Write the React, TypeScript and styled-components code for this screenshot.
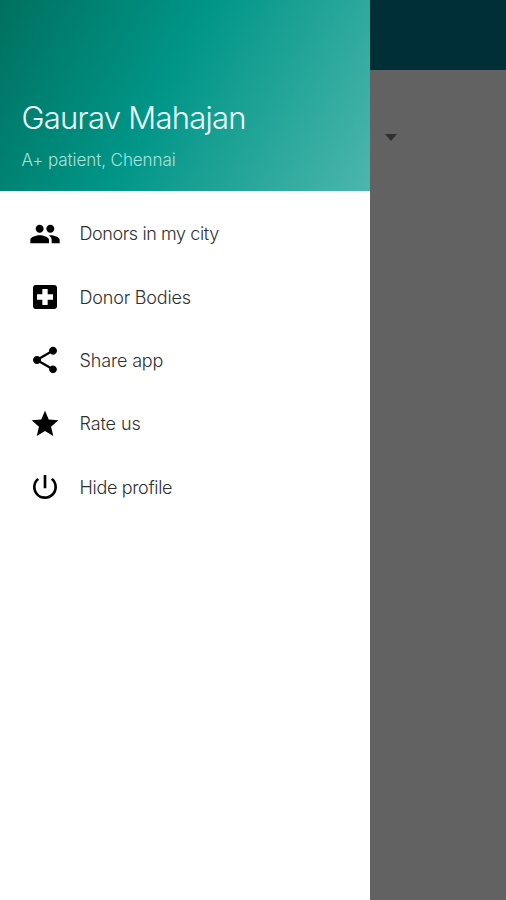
import React from 'react';
import styled, { createGlobalStyle } from 'styled-components';
import { MdPeople, MdLocalHospital, MdShare, MdStar, MdPowerSettingsNew } from 'react-icons/md';

const GlobalStyle = createGlobalStyle`
  * { box-sizing: border-box; }
  body { margin: 0; }
`;

const Screen = styled.div`
  display: flex;
  width: 506px;
  height: 900px;
  overflow: hidden;
  background: #626262;
  font-family: Inter, 'Liberation Sans', sans-serif;
  font-weight: 300;
`;

const Drawer = styled.aside`
  flex: 0 0 370px;
  background: #fff;
`;

const Header = styled.header`
  display: flex;
  flex-direction: column;
  justify-content: flex-end;
  height: 191px;
  padding: 0 21.5px 20px;
  background: linear-gradient(119deg, #00705f 0%, #009688 45%, #4db6ac 100%);
`;

const Name = styled.h1`
  margin: 0 0 13px;
  font-size: 31px;
  font-weight: 300;
  line-height: 36px;
  letter-spacing: -0.74px;
  white-space: nowrap;
  color: #f0fffd;
`;

const Details = styled.p`
  margin: 0;
  font-size: 17px;
  line-height: 22px;
  letter-spacing: -0.08px;
  white-space: nowrap;
  color: #a9e2dc;
`;

const Menu = styled.nav`
  display: flex;
  flex-direction: column;
  padding-top: 11px;
`;

const MenuItem = styled.a`
  display: flex;
  align-items: center;
  height: 63.3px;
  padding-left: 29px;
  gap: 18.5px;
  color: #000;

  svg {
    width: 32px;
    height: 32px;
    flex: none;
  }
`;

const Label = styled.span<{ $spacing: number }>`
  padding-top: 1.4px;
  font-size: 18px;
  letter-spacing: ${(p) => p.$spacing}px;
  line-height: 24px;
  white-space: nowrap;
  color: #303030;
`;

const DimmedPage = styled.main`
  flex: 1;
`;

const Toolbar = styled.div`
  height: 70px;
  background: #002e37;
`;

const DropdownArrow = styled.svg`
  display: block;
  width: 12px;
  height: 7px;
  margin: 64px 0 0 15px;
  fill: #303030;
`;

const items = [
  { label: 'Donors in my city', Icon: MdPeople, spacing: -0.4 },
  { label: 'Donor Bodies', Icon: MdLocalHospital, spacing: -0.18 },
  { label: 'Share app', Icon: MdShare, spacing: -0.15 },
  { label: 'Rate us', Icon: MdStar, spacing: -0.1 },
  { label: 'Hide profile', Icon: MdPowerSettingsNew, spacing: -0.32 },
];

export default function App() {
  return (
    <>
      <GlobalStyle />
      <Screen>
        <Drawer>
          <Header>
            <Name>Gaurav Mahajan</Name>
            <Details>A+ patient, Chennai</Details>
          </Header>
          <Menu>
            {items.map(({ label, Icon, spacing }) => (
              <MenuItem key={label}>
                <Icon />
                <Label $spacing={spacing}>{label}</Label>
              </MenuItem>
            ))}
          </Menu>
        </Drawer>
        <DimmedPage>
          <Toolbar />
          <DropdownArrow viewBox="0 0 12 7">
            <path d="M0 0h12L6 7z" />
          </DropdownArrow>
        </DimmedPage>
      </Screen>
    </>
  );
}
